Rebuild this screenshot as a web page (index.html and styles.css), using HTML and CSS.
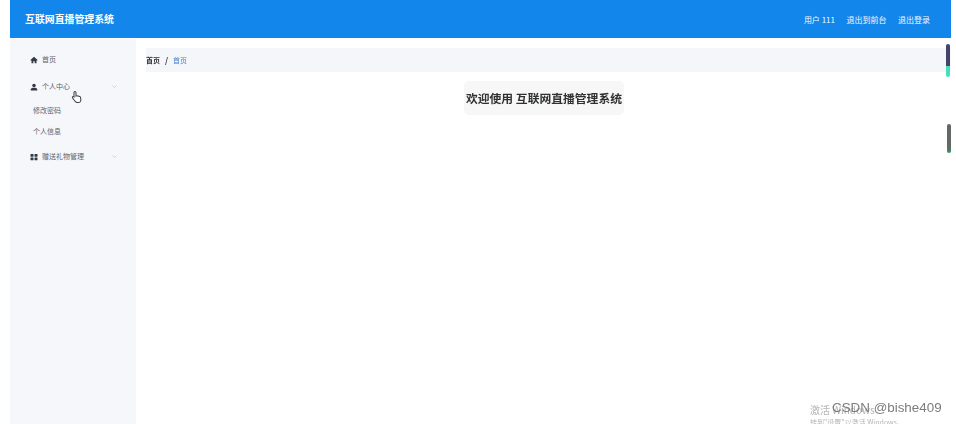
FILE: index.html
```html
<!DOCTYPE html>
<html lang="zh-CN">
<head>
<meta charset="utf-8">
<title>互联网直播管理系统</title>
<link rel="stylesheet" href="styles.css">
</head>
<body>
<div class="app">
  <header class="navbar">
    <div class="brand">互联网直播管理系统</div>
    <nav class="user-nav">
      <span>用户 111</span>
      <span>退出到前台</span>
      <span>退出登录</span>
    </nav>
  </header>
  <div class="body-row">
    <aside class="sidebar">
      <div class="menu-item">
        <svg class="icon" viewBox="0 0 16 16"><path d="M8 1.500 0.800 8.200 2 9.400l1-.9V14.500h3.600v-4h2.800v4H13V8.500l1 .9 1.200-1.200z"/></svg>
        <span class="menu-label">首页</span>
      </div>
      <div class="menu-item">
        <svg class="icon" viewBox="0 0 16 16"><circle cx="8" cy="4.800" r="3.500"/><path d="M1.500 15v-2.200C1.500 10.500 4 9.500 8 9.500s6.500 1 6.500 3.300V15z"/></svg>
        <span class="menu-label">个人中心</span>
        <svg class="chevron" viewBox="0 0 10 6"><path d="M1 1l4 4 4-4"/></svg>
      </div>
      <div class="submenu">
        <div class="submenu-item">修改密码</div>
        <div class="submenu-item">个人信息</div>
      </div>
      <div class="menu-item">
        <svg class="icon" viewBox="0 0 16 16"><rect x="1" y="2" width="6" height="5.500" rx="1"/><rect x="9" y="2" width="6" height="5.500" rx="1"/><rect x="1" y="9" width="6" height="5.500" rx="1"/><rect x="9" y="9" width="6" height="5.500" rx="1"/></svg>
        <span class="menu-label">赠送礼物管理</span>
        <svg class="chevron" viewBox="0 0 10 6"><path d="M1 1l4 4 4-4"/></svg>
      </div>
    </aside>
    <main class="content">
      <div class="breadcrumb">
        <span class="crumb-root">首页</span>
        <span class="crumb-sep">/</span>
        <span class="crumb-current">首页</span>
      </div>
      <div class="welcome-row">
        <h1 class="welcome">欢迎使用 互联网直播管理系统</h1>
      </div>
    </main>
  </div>
  <div class="scroll-thumb scroll-thumb-a"></div>
  <div class="scroll-thumb scroll-thumb-b"></div>
  <svg class="cursor" viewBox="0 0 14 16"><path d="M4.500 1.500c.8 0 1.300.6 1.300 1.300V7l.7-.3c.6-.2 1.200 0 1.500.3.600-.3 1.300-.1 1.600.4.700-.2 1.400.2 1.500.9l.4 2.900c.1 1.900-1.100 3.300-3 3.300H7.400c-1 0-1.800-.4-2.400-1.200L1.800 9.200c-.4-.6-.2-1.200.3-1.500.5-.3 1-.2 1.400.2V2.800c0-.7.300-1.300 1-1.300z"/></svg>
  <div class="activation">
    <div class="activation-title">激活 Windows</div>
    <div class="activation-sub">转到"设置"以激活 Windows。</div>
  </div>
  <div class="watermark">CSDN @bishe409</div>
</div>
</body>
</html>
```

FILE: styles.css
```css
* { box-sizing: border-box; }
html, body { margin: 0; height: 100%; background: #fff; overflow: hidden; }
body { font-family: "Noto Sans CJK SC", "Liberation Sans", sans-serif; }

.app {
  position: relative;
  width: 956px;
  height: 424px;
  padding: 0 5px 0 10px;
  display: flex;
  flex-direction: column;
  overflow: hidden;
  filter: blur(0.6px);
}

.navbar {
  flex: none;
  height: 38px;
  background: #1286ea;
  color: #fff;
  display: flex;
  align-items: center;
  justify-content: space-between;
  padding: 1px 21px 0 15px;
}
.brand { font-size: 9.900px; font-weight: 700; line-height: 1; }
.user-nav { display: flex; gap: 11.500px; font-size: 8px; line-height: 1; color: #f4f9ff; }

.body-row { flex: 1; display: flex; padding-top: 1px; min-height: 0; }

.sidebar {
  flex: none;
  width: 126px;
  background: #f5f7fb;
  padding-top: 8px;
  color: #5f646c;
}
.menu-item {
  height: 25px;
  display: flex;
  align-items: center;
  padding: 0 19px 0 20px;
  font-size: 7px;
}
.menu-item + .menu-item { margin-top: 2px; }
.icon { width: 8px; height: 8px; fill: #333a45; flex: none; margin-right: 4px; }
.menu-label { flex: 1; line-height: 1; }
.chevron { width: 5px; height: 3px; fill: none; stroke: #a9aeb6; stroke-width: 1; flex: none; }

.submenu { font-size: 7px; }
.submenu-item { height: 21px; display: flex; align-items: center; padding-left: 23px; }
.submenu + .menu-item { margin-top: 3px; }

.content { flex: 1; min-width: 0; padding: 9px 0 0 10px; }

.breadcrumb {
  height: 24px;
  background: #f5f6fa;
  display: flex;
  align-items: center;
  gap: 5px;
  font-size: 7px;
  line-height: 1;
}
.crumb-root { color: #303133; font-weight: 700; }
.crumb-sep { color: #303133; font-weight: 700; font-size: 8px; }
.crumb-current { color: #3f7fc9; }

.welcome-row { display: flex; justify-content: center; padding-top: 9px; padding-right: 9px; }
.welcome {
  margin: 0;
  height: 34px;
  padding: 0 2px;
  display: flex;
  align-items: center;
  background: #f7f7f7;
  border-radius: 5px;
  color: #303133;
  font-size: 11.800px;
  font-weight: 700;
  line-height: 1;
}

.scroll-thumb { position: absolute; border-radius: 2px; }
.scroll-thumb-a {
  left: 946px; top: 44px; width: 4px; height: 33px;
  background: linear-gradient(#47426a 0 68%, #45e0ba 68% 100%);
}
.scroll-thumb-b {
  left: 947px; top: 124px; width: 4px; height: 29px;
  background: linear-gradient(#636766 0 72%, #3f8c62 100%);
}

.cursor {
  position: absolute; left: 71px; top: 90px; width: 12px; height: 14px;
  fill: #fff; stroke: #3c3c3c; stroke-width: 1.200;
}

.activation { position: absolute; left: 810px; top: 405px; color: #b4b4b4; line-height: 1; white-space: nowrap; }
.activation-title { font-size: 10px; margin-bottom: 4px; }
.activation-sub { font-size: 7px; }

.watermark {
  position: absolute; left: 832px; top: 401px;
  font-family: "Liberation Sans", sans-serif;
  font-size: 13.400px; line-height: 1; color: #7c7c7c; white-space: nowrap;
}
```
